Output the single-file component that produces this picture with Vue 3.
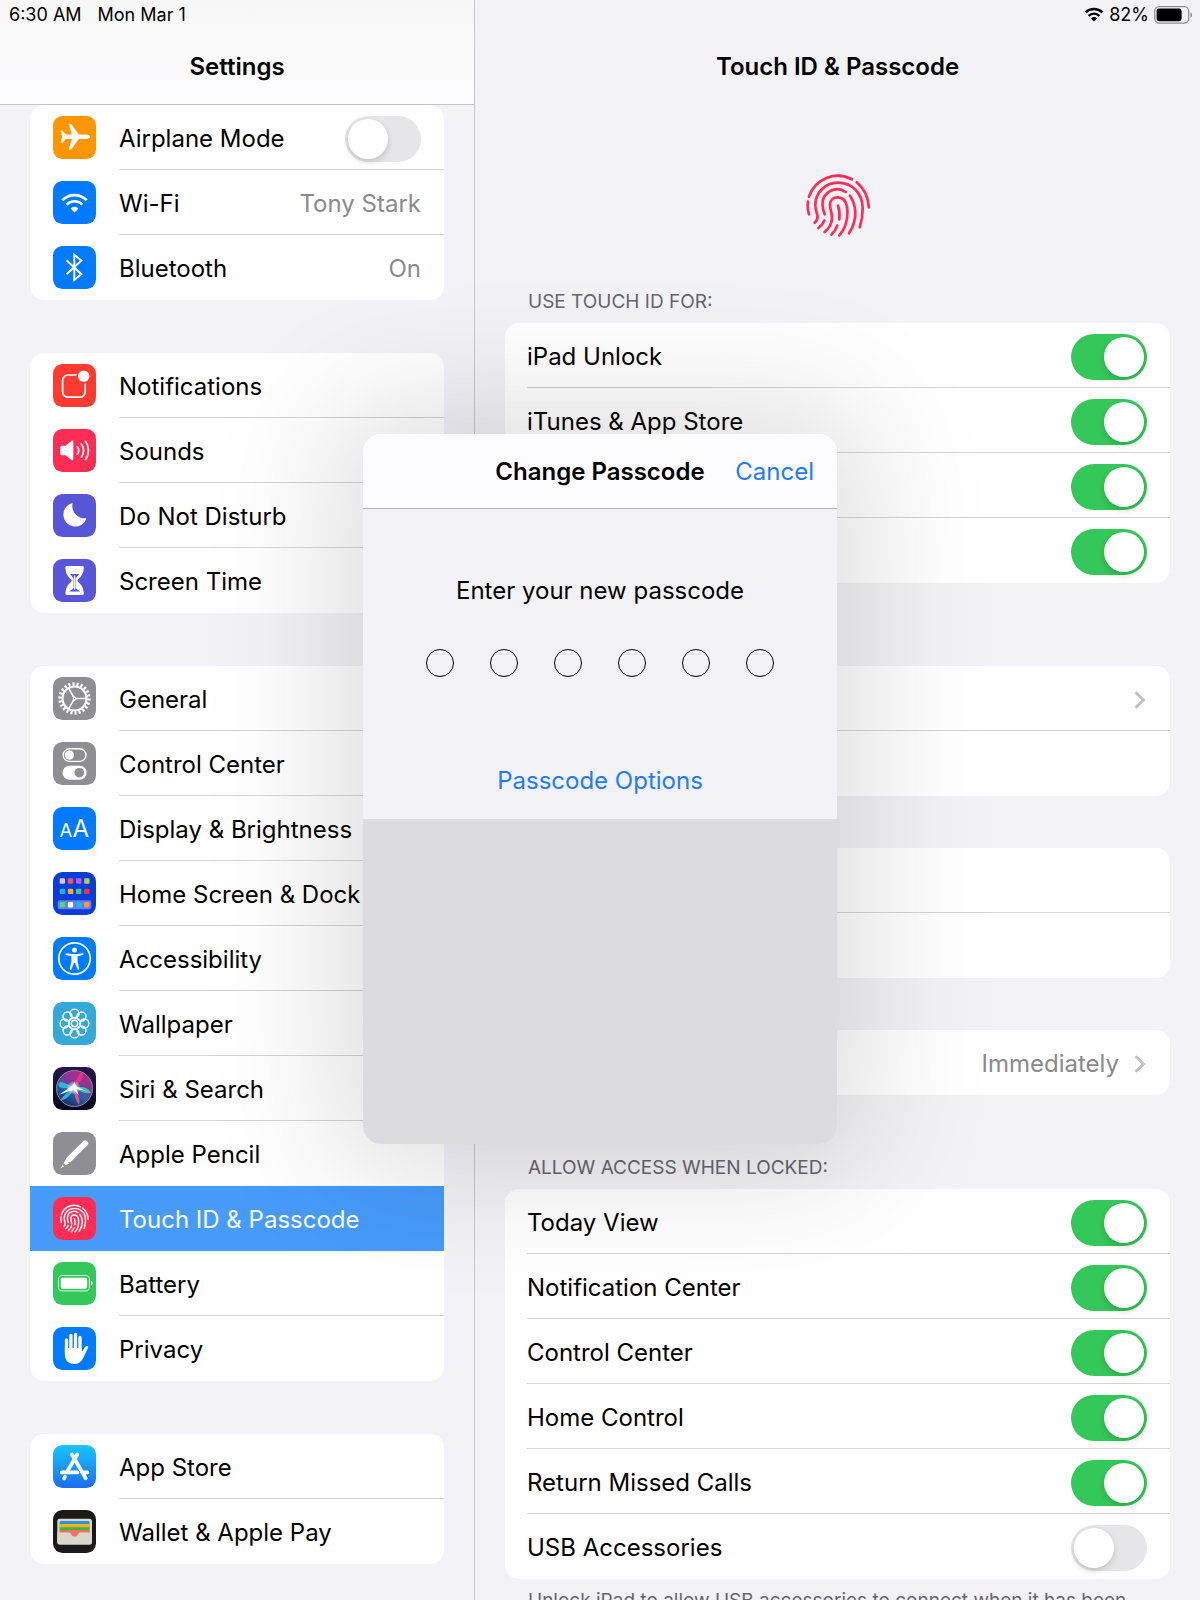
<!-- App.vue -->
<template>
  <div class="screen">
    <aside class="sidebar">
      <header class="sidebar-header">
        <div class="status">
          <span>6:30 AM</span>
          <span>Mon Mar 1</span>
        </div>
        <h1 class="title">Settings</h1>
      </header>
      <nav class="sidebar-groups">
        <div v-for="(group, g) in sidebarGroups" :key="g" class="card">
          <component
            :is="item.toggle ? 'label' : 'a'"
            v-for="item in group"
            :key="item.label"
            :href="item.toggle ? null : '#'"
            class="row nav-row"
            :class="{ selected: item.selected, 'no-line': item.noLine }"
          >
            <svg class="icon" viewBox="0 0 43 43" aria-hidden="true" v-html="icons[item.icon]"></svg>
            <span class="row-body">
              <span class="row-label">{{ item.label }}</span>
              <input v-if="item.toggle" v-model="item.on" type="checkbox" class="switch" />
              <span v-if="item.value" class="row-value">{{ item.value }}</span>
            </span>
          </component>
        </div>
      </nav>
    </aside>

    <main class="detail">
      <header class="detail-header">
        <div class="status status-right">
          <svg class="status-wifi" viewBox="0 0 20 15" aria-hidden="true">
            <path d="M1.6 5.4a12 12 0 0 1 16.8 0M4.6 8.8a7.8 7.8 0 0 1 10.8 0" fill="none" stroke="#000" stroke-width="2.4" />
            <path d="M10 14.4l-3-3a4.3 4.3 0 0 1 6 0z" />
          </svg>
          <span>82%</span>
          <svg class="status-battery" viewBox="0 0 39 18" aria-hidden="true">
            <rect x="0.7" y="0.7" width="34" height="16.4" rx="4.5" fill="none" stroke="#8e8e93" stroke-width="1.3" />
            <rect x="2.6" y="2.6" width="25" height="12.6" rx="2.4" />
            <path d="M36.4 6.2c2.2 1 2.2 4.6 0 5.6z" fill="#8e8e93" />
          </svg>
        </div>
        <h2 class="title">Touch ID &amp; Passcode</h2>
      </header>

      <svg class="fingerprint" viewBox="0 0 64 64" aria-hidden="true" v-html="fingerprint"></svg>

      <h3 class="section-label">USE TOUCH ID FOR:</h3>
      <div class="card">
        <label v-for="item in touchIdUses" :key="item.name" class="row">
          <span class="row-body">
            <span class="row-label">{{ item.label }}</span>
            <input v-model="item.on" type="checkbox" class="switch" :aria-label="item.name" />
          </span>
        </label>
      </div>

      <div class="card fingers">
        <a v-for="item in fingers" :key="item.name" href="#" class="row" :aria-label="item.name">
          <span class="row-body">
            <span class="row-label"></span>
            <svg v-if="item.chevron" class="chevron" viewBox="0 0 12 18" aria-hidden="true">
              <path d="M1.5 1.2l8 7.8-8 7.8" />
            </svg>
          </span>
        </a>
      </div>

      <div class="card spaced">
        <a v-for="name in passcodeActions" :key="name" href="#" class="row" :aria-label="name">
          <span class="row-body"></span>
        </a>
      </div>

      <div class="card spaced">
        <a href="#" class="row" aria-label="Require Passcode">
          <span class="row-body">
            <span class="row-label"></span>
            <span class="row-value">Immediately</span>
            <svg class="chevron" viewBox="0 0 12 18" aria-hidden="true">
              <path d="M1.5 1.2l8 7.8-8 7.8" />
            </svg>
          </span>
        </a>
      </div>

      <h3 class="section-label locked-label">ALLOW ACCESS WHEN LOCKED:</h3>
      <div class="card">
        <label v-for="item in lockedAccess" :key="item.label" class="row">
          <span class="row-body">
            <span class="row-label">{{ item.label }}</span>
            <input v-model="item.on" type="checkbox" class="switch" />
          </span>
        </label>
      </div>
      <p class="footnote">
        Unlock iPad to allow USB accessories to connect when it has been locked for more than an hour.
      </p>
    </main>

    <div class="overlay">
      <section class="dialog" role="dialog" aria-labelledby="dialog-title">
        <header class="dialog-header">
          <h2 id="dialog-title" class="title dialog-title">Change Passcode</h2>
          <button type="button" class="link-button cancel">Cancel</button>
        </header>
        <div class="dialog-body">
          <p class="prompt">Enter your new passcode</p>
          <div class="dots">
            <span v-for="n in 6" :key="n" class="dot"></span>
          </div>
          <button type="button" class="link-button">Passcode Options</button>
        </div>
        <div class="keyboard-space"></div>
      </section>
    </div>
  </div>
</template>

<script setup>
import { ref } from 'vue';

const sidebarGroups = ref([
  [
    { label: 'Airplane Mode', icon: 'airplane', toggle: true, on: false },
    { label: 'Wi-Fi', icon: 'wifi', value: 'Tony Stark' },
    { label: 'Bluetooth', icon: 'bluetooth', value: 'On' },
  ],
  [
    { label: 'Notifications', icon: 'notifications' },
    { label: 'Sounds', icon: 'sounds' },
    { label: 'Do Not Disturb', icon: 'moon' },
    { label: 'Screen Time', icon: 'hourglass' },
  ],
  [
    { label: 'General', icon: 'gear' },
    { label: 'Control Center', icon: 'controls' },
    { label: 'Display & Brightness', icon: 'display' },
    { label: 'Home Screen & Dock', icon: 'home' },
    { label: 'Accessibility', icon: 'accessibility' },
    { label: 'Wallpaper', icon: 'wallpaper' },
    { label: 'Siri & Search', icon: 'siri' },
    { label: 'Apple Pencil', icon: 'pencil', noLine: true },
    { label: 'Touch ID & Passcode', icon: 'touchid', selected: true },
    { label: 'Battery', icon: 'battery' },
    { label: 'Privacy', icon: 'hand' },
  ],
  [
    { label: 'App Store', icon: 'appstore' },
    { label: 'Wallet & Apple Pay', icon: 'wallet' },
  ],
]);

// rows that sit behind the dialog only carry an accessible name
const touchIdUses = ref([
  { name: 'iPad Unlock', label: 'iPad Unlock', on: true },
  { name: 'iTunes & App Store', label: 'iTunes & App Store', on: true },
  { name: 'Apple Pay', label: '', on: true },
  { name: 'Password AutoFill', label: '', on: true },
]);

const fingers = [
  { name: 'Finger 1', chevron: true },
  { name: 'Add a Fingerprint' },
];

const passcodeActions = ['Turn Passcode Off', 'Change Passcode'];

const lockedAccess = ref([
  { label: 'Today View', on: true },
  { label: 'Notification Center', on: true },
  { label: 'Control Center', on: true },
  { label: 'Home Control', on: true },
  { label: 'Return Missed Calls', on: true },
  { label: 'USB Accessories', on: false },
]);

// ridges of the fingerprint, drawn on a 64x64 grid
const ridges = [
  'M3 23.7A30.3 30.3 0 0 1 46 6.3',
  'M50.7 9.3C58 15.5 62.3 24 62.8 34.3',
  'M2 28.7Q1 35 3 41.3',
  'M8.7 49.7C11.5 47 12 45 11.5 42.5C10.5 39 9.3 36 9.3 32A22.4 22.4 0 0 1 31.7 9.7C46 9.7 56.5 20 56.7 35C56.8 42 55.8 48 53.7 54.3',
  'M18.7 41.3C17 37.5 16.5 34.5 16.5 31.5A14.7 14.7 0 0 1 39.7 19',
  'M44 22.7C49.5 31 53 45 43 60.3',
  'M18.7 59C25.5 53 27 47 25.5 40.5C24.5 36.5 24 34 24 31.5C24 27 27.5 24.3 31.8 24.3C37.5 24.3 40 28 41 34C42.5 45 40.5 54 33.3 62.5',
  'M32 32.7C33.5 37 33.8 42 33.3 46.3',
  'M31.3 52.5Q29.5 58 25.5 61.5',
  'M18.3 47.5Q16.5 52 12.5 55',
];
const ridgePaths = ridges.map((d) => `<path d="${d}"/>`).join('');
const fingerprint = `<g fill="none" stroke="#ff2d55" stroke-width="2.7" stroke-linecap="round">${ridgePaths}</g>`;

const tile = (color) => `<rect width="43" height="43" rx="9.5" fill="${color}"/>`;

const homeRows = [
  { y: 6.3, colors: ['#d9c6c0', '#ff4d68', '#b85cff', '#b4d433'] },
  { y: 16.7, colors: ['#19b4f5', '#ffab1a', '#2bd08a', '#ff2d3f'] },
  { y: 30, colors: ['#4be06a', '#ffffff', '#1ab8f5', '#ff944d'] },
];
const homeSquares = homeRows
  .map((row) => row.colors
    .map((c, i) => `<rect x="${6.7 + i * 8.15}" y="${row.y}" width="5.4" height="5.4" rx="1.2" fill="${c}"/>`)
    .join(''))
  .join('');

const petals = Array.from({ length: 8 }, (_, i) => {
  const a = (i * Math.PI) / 4;
  return `<circle cx="${21.5 + 9.9 * Math.cos(a)}" cy="${21.5 + 9.9 * Math.sin(a)}" r="4.5"/>`;
}).join('');

const icons = {
  airplane: tile('#ff9500')
    + '<path fill="#fff" d="M37 20.8c0-1.3-1.8-2.2-4-2.2h-7.2L18.6 8.6c-.4-.6-1-.8-1.6-.8h-1.3l3.2 10.8h-6.2l-3-3.8H7.6l1.6 6-1.6 6h2.1l3-3.8h6.2l-3.2 10.8H17c.6 0 1.2-.2 1.6-.8L25.8 23H33c2.2 0 4-.9 4-2.2z"/>',
  wifi: tile('#007aff')
    + '<g fill="none" stroke="#fff" stroke-width="2.7"><path d="M9.3 19.3A16.8 16.8 0 0 1 33.7 19.3M13.7 23.6A10.8 10.8 0 0 1 29.3 23.6"/></g><path fill="#fff" d="M21.5 31.6l-4-4.1a5.7 5.7 0 0 1 8 0z"/>',
  bluetooth: tile('#007aff')
    + '<path fill="none" stroke="#fff" stroke-width="2" d="M13.5 14.3L28.3 28.2L21.3 33.8V8.8L28.3 14.5L13.5 28.3"/>',
  notifications: tile('#ff3a30')
    + '<rect x="9.6" y="11" width="22.6" height="22.2" rx="5.5" fill="none" stroke="#fff" stroke-width="1.7"/><circle cx="30.7" cy="12.2" r="7.4" fill="#ff3a30"/><circle cx="30.7" cy="12.2" r="5.7" fill="#fff"/>',
  sounds: tile('#ff2d55')
    + '<path fill="#fff" d="M9 16.8h3.6l5.800-4.800c1.200-.8 1.900-.4 1.900.8v17.400c0 1.200-.7 1.600-1.900.8l-5.800-4.800H9c-1.200 0-1.700-.6-1.700-1.800v-5.800c0-1.200.5-1.800 1.700-1.800z"/><g fill="none" stroke="#fff" stroke-width="1.7" stroke-linecap="round"><path d="M24.3 17.8a5.8 5.8 0 0 1 0 7.4M28.4 15a10.8 10.8 0 0 1 0 13M32.5 12.3a16 16 0 0 1 0 18.4"/></g>',
  moon: tile('#5856d6')
    + '<path fill="#fff" d="M19.7 9A11.9 11.9 0 1 0 33.6 24.2A12.3 12.3 0 0 1 19.7 9z"/>',
  hourglass: tile('#5856d6')
    + '<path fill="#fff" d="M13.8 7h15.6c1 0 1.5.6 1.4 1.6-.2 5.8-2.3 9-5.6 11.7-.9.8-.9 1.8 0 2.6 3.3 2.7 5.4 5.9 5.6 11.4.1 1-.4 1.6-1.4 1.6H13.8c-1 0-1.5-.6-1.4-1.6.2-5.5 2.3-8.7 5.6-11.4.9-.8.9-1.8 0-2.6-3.3-2.7-5.4-5.9-5.6-11.7C12.3 7.6 12.8 7 13.8 7z"/><path fill="#5856d6" d="M17 15h9.2l-3.6 4.400v9.800l4.600 3.300h-11.2l4.600-3.300v-9.800z"/><path stroke="#fff" stroke-width="1.3" d="M21.6 16.500v14"/>',
  gear: tile('#8e8e93')
    + '<g fill="none" stroke="#fff"><circle cx="21.5" cy="21.5" r="12" stroke-width="2.2"/><circle cx="21.5" cy="21.5" r="14.4" stroke-width="3.6" pathLength="44" stroke-dasharray="1 1"/><circle cx="21.5" cy="21.5" r="1.3" stroke-width="1.2"/><path stroke-width="1.6" d="M22.500 21.5h11M21 20.500l-5.500-9.400M21 22.500l-5.500 9.400"/></g>',
  controls: tile('#8e8e93')
    + '<rect x="10.2" y="6.8" width="22.8" height="12.6" rx="6.3" fill="none" stroke="#fff" stroke-width="1.4"/><circle cx="16.4" cy="13.1" r="4.6" fill="#fff"/><rect x="9.5" y="23.7" width="24.2" height="14" rx="7" fill="#fff"/><circle cx="26.3" cy="30.7" r="4.8" fill="#8e8e93"/>',
  display: tile('#007aff')
    + '<g fill="#fff" font-family="Inter, sans-serif"><text x="6.5" y="30" font-size="18.5">A</text><text x="19.5" y="30" font-size="24">A</text></g>',
  home: tile('#0b3bd8')
    + `<rect x="4.7" y="28.2" width="33.6" height="9" rx="2" fill="#fff" opacity="0.35"/>${homeSquares}`,
  accessibility: tile('#007aff')
    + '<circle cx="21.5" cy="21.5" r="15.7" fill="none" stroke="#fff" stroke-width="1.7"/><circle cx="21.5" cy="12.9" r="2.5" fill="#fff"/><path fill="#fff" d="M13.2 16.3l5.6.8h5.4l5.6-.8c1 0 1.1 1.5.2 1.7l-5.4 1.2v5.3l1.600 7.200c.3 1.100-1.200 1.700-1.700.6L22.1 26h-1.200l-2.400 6.300c-.5 1.100-2 .5-1.700-.6l1.600-7.200v-5.300L13 18c-.9-.2-.8-1.700.2-1.700z"/>',
  wallpaper: tile('#34a8d6')
    + `<g fill="none" stroke="#fff" stroke-width="1.4">${petals}<circle cx="21.5" cy="21.5" r="3.2"/><circle cx="21.5" cy="21.5" r="6"/></g>`,
  siri: '<defs><linearGradient id="siriBg" x1="0" y1="0" x2="0" y2="1"><stop offset="0" stop-color="#25164a"/><stop offset="1" stop-color="#05091c"/></linearGradient><linearGradient id="siriOrb" x1="0.8" y1="0" x2="0.25" y2="1"><stop offset="0" stop-color="#c0247f"/><stop offset="0.45" stop-color="#7c3a98"/><stop offset="0.6" stop-color="#2267a8"/><stop offset="1" stop-color="#13265c"/></linearGradient><radialGradient id="siriGlow"><stop offset="0" stop-color="#fff"/><stop offset="0.35" stop-color="#fff" stop-opacity="0.7"/><stop offset="1" stop-color="#fff" stop-opacity="0"/></radialGradient></defs>'
    + tile('url(#siriBg)')
    + '<circle cx="21.5" cy="21.5" r="18" fill="url(#siriOrb)" stroke="#8f88a8" stroke-width="1"/><path fill="#35c8e8" opacity="0.8" d="M21 21C13 16 7 13 5.5 17c-.8 4 4 5 15.5 4z"/><path fill="#2ae0b4" opacity="0.85" d="M21 21c7-2 14-1 17 5-4 1-10-.5-17-5z"/><path fill="#ff4f8e" opacity="0.9" d="M20 20c1 7 3 14 6 18 1.5-5-1-12-6-18z"/><path fill="#42bce8" opacity="0.85" d="M21 21C14 25 9 30 7.5 33.5 13 33 18 28 21 21z"/><path fill="#ff3d98" opacity="0.6" d="M21 21c1-7 4-13 8-16 3 3-1 11-8 16z"/><circle cx="20.5" cy="20.8" r="7" fill="url(#siriGlow)"/><path fill="#fff" d="M5.5 28l14-9.3 2-4 1.2 4.3 9.3 4.5-8.5-1.3 2.3 6.3-5-6z"/>',
  pencil: tile('#8e8e93')
    + '<path stroke="#fff" stroke-width="6" stroke-linecap="round" d="M16 27.3L32.2 11.4"/><path fill="#fff" d="M12.5 27.7l3.7 3.7-3.6 1.9-2.1-2.1zM9.4 32.7l1.8 1.8-3.7 1.9z"/>',
  touchid: tile('#ff2d55')
    + `<g transform="translate(7 7) scale(0.45)" fill="none" stroke="#fff" stroke-width="3.2" stroke-linecap="round">${ridgePaths}</g>`,
  battery: tile('#34c759')
    + '<rect x="5.4" y="13.5" width="31" height="15.4" rx="3.8" fill="none" stroke="#fff" stroke-opacity="0.7" stroke-width="1.1"/><rect x="7.7" y="15.7" width="26.4" height="11" rx="2" fill="#fff"/><path fill="#fff" opacity="0.8" d="M38 18.8c2.2.9 2.2 3.9 0 4.8z"/>',
  hand: tile('#007aff')
    + '<g stroke="#fff" stroke-width="3.3" stroke-linecap="round"><path d="M13.5 13v13M17.9 8.5v17M22.5 7.5v17M27 10.5v15"/></g><path fill="#fff" d="M11.85 21h16.8v4.2l3.2-5c.8-1.3 1.9-1.6 3-1 .5.3.5.8.2 1.5L30.2 31c-1.900 4-5 6-9 6-5.600 0-9.350-3.500-9.350-9.500z"/>',
  appstore: '<defs><linearGradient id="storeBg" x1="0" y1="0" x2="0" y2="1"><stop offset="0" stop-color="#18c4fb"/><stop offset="1" stop-color="#1b6df2"/></linearGradient></defs>'
    + tile('url(#storeBg)')
    + '<g fill="none" stroke="#fff" stroke-width="3.7" stroke-linecap="round"><path d="M24.2 9.5L14.2 26.5M19 9.5L32.7 33.2M12 31.8L11 33.4M8.7 27.4h15.8M31 27.4h3.5"/></g>',
  wallet: tile('#1a1a1a')
    + '<rect x="4.3" y="8.8" width="34.7" height="25.8" rx="2.5" fill="#d9d6cb"/><rect x="6.6" y="11" width="30" height="8" rx="1.5" fill="#2b96d3"/><rect x="6.6" y="14" width="30" height="5" fill="#fdb12b"/><rect x="6.6" y="17.2" width="30" height="4" fill="#3fb932"/><rect x="6.6" y="20" width="30" height="9" fill="#f2716b"/><path fill="#d9d6cb" d="M4.3 22.6h11.2c1.6 0 2 .6 2.6 1.6.7 1.4 1.9 2.3 3.5 2.3s2.8-.9 3.5-2.3c.6-1 1-1.6 2.6-1.6H39v9.5a2.5 2.5 0 0 1-2.5 2.5H6.8a2.5 2.5 0 0 1-2.5-2.5z"/>',
};
</script>

<style>
body {
  margin: 0;
  background: #f2f2f7;
}
</style>

<style scoped>
.screen {
  position: relative;
  display: flex;
  height: 100vh;
  overflow: hidden;
  background: #f2f2f7;
  color: #000;
  font-family: Inter, "Liberation Sans", sans-serif;
  font-size: 24px;
  line-height: 32px;
}

.screen * {
  box-sizing: border-box;
}

.sidebar {
  flex: 0 0 475px;
  overflow: hidden;
  border-right: 1px solid #c8c8cc;
}

.sidebar-header {
  height: 105px;
  border-bottom: 1px solid #c4c4c8;
  background: linear-gradient(#f7f7f7, #fdfdff);
}

.detail-header {
  height: 105px;
  margin: 0 -30px;
}

.status {
  display: flex;
  gap: 16px;
  height: 50px;
  padding: 5px 9px 0;
  font-size: 18px;
  line-height: 20px;
}

.status-right {
  justify-content: flex-end;
  gap: 5px;
  padding-right: 7px;
}

.status-wifi {
  width: 20px;
  height: 15px;
  margin-top: 2px;
}

.status-battery {
  width: 39px;
  height: 18px;
  margin-top: 1px;
}

.title {
  margin: 0;
  font-size: 24px;
  font-weight: 600;
  line-height: 34px;
  text-align: center;
}

.sidebar-groups {
  display: flex;
  flex-direction: column;
  gap: 53px;
  padding: 0 30px;
}

.card {
  overflow: hidden;
  border-radius: 14px;
  background: #fff;
}

.row {
  display: flex;
  align-items: center;
  gap: 23px;
  height: 65px;
  padding-left: 22px;
  color: inherit;
  text-decoration: none;
}

.nav-row {
  padding-left: 23px;
}

.icon {
  flex: none;
  width: 43px;
  height: 43px;
}

.row-body {
  display: flex;
  flex: 1;
  align-items: center;
  height: 65px;
  padding-top: 3px;
  padding-right: 23px;
  border-bottom: 1px solid #d4d4d6;
}

.row:last-child .row-body,
.selected .row-body,
.no-line .row-body {
  border-bottom-color: transparent;
}

.row-label {
  flex: 1;
  white-space: nowrap;
}

.row-value {
  color: #8a8a8e;
}

.selected {
  background: #479bfb;
  color: #fff;
}

.switch {
  flex: none;
  width: 76px;
  height: 46px;
  margin: 0;
  padding: 3px;
  border-radius: 23px;
  background: #e6e6e8;
  appearance: none;
}

.switch::before {
  display: block;
  width: 40px;
  height: 40px;
  border-radius: 50%;
  background: #fff;
  box-shadow: 0 3px 6px rgba(0, 0, 0, 0.16);
  content: "";
}

.switch:checked {
  background: #34c759;
}

.switch:checked::before {
  margin-left: auto;
}

.detail {
  flex: 1;
  min-width: 0;
  overflow: hidden;
  padding: 0 30px;
}

.fingerprint {
  display: block;
  width: 64px;
  height: 64px;
  margin: 68px auto 52px;
}

.section-label {
  margin: 0;
  padding: 0 23px 8px;
  color: #66666b;
  font-size: 19px;
  font-weight: 400;
  line-height: 26px;
}

.fingers {
  margin-top: 83px;
}

.spaced {
  margin-top: 52px;
}

.locked-label {
  padding-top: 60px;
}

.chevron {
  width: 12px;
  height: 18px;
  margin-left: 15px;
  margin-right: 1px;
  fill: none;
  stroke: #c2c2c6;
  stroke-width: 3;
}

.footnote {
  margin: 0;
  padding: 10px 23px;
  color: #66666b;
  font-size: 19px;
  line-height: 24px;
}

.overlay {
  position: absolute;
  inset: 0;
  display: flex;
  align-items: center;
  justify-content: center;
  padding-bottom: 22px;
}

.dialog {
  display: flex;
  flex-direction: column;
  width: 474px;
  height: 710px;
  overflow: hidden;
  border-radius: 18px;
  background: #f2f2f7;
  box-shadow: 0 0 130px 30px rgba(0, 0, 0, 0.13);
}

.dialog-header {
  display: grid;
  grid-template-columns: 1fr auto 1fr;
  align-items: center;
  height: 75px;
  padding: 2px 23px 0;
  border-bottom: 1px solid #b4b4b8;
  background: #fcfcfe;
}

.dialog-title {
  grid-column: 2;
}

.cancel {
  justify-self: end;
}

.link-button {
  padding: 0;
  border: 0;
  background: none;
  color: #1f7aff;
  font: inherit;
}

.dialog-body {
  display: flex;
  flex-direction: column;
  align-items: center;
  height: 310px;
  padding-top: 66px;
}

.prompt {
  margin: 0;
}

.dots {
  display: flex;
  gap: 36px;
  margin: 42px 0 88px;
}

.dot {
  width: 28px;
  height: 28px;
  border: 1px solid #000;
  border-radius: 50%;
}

.keyboard-space {
  flex: 1;
  background: #dcdbe0;
}
</style>
